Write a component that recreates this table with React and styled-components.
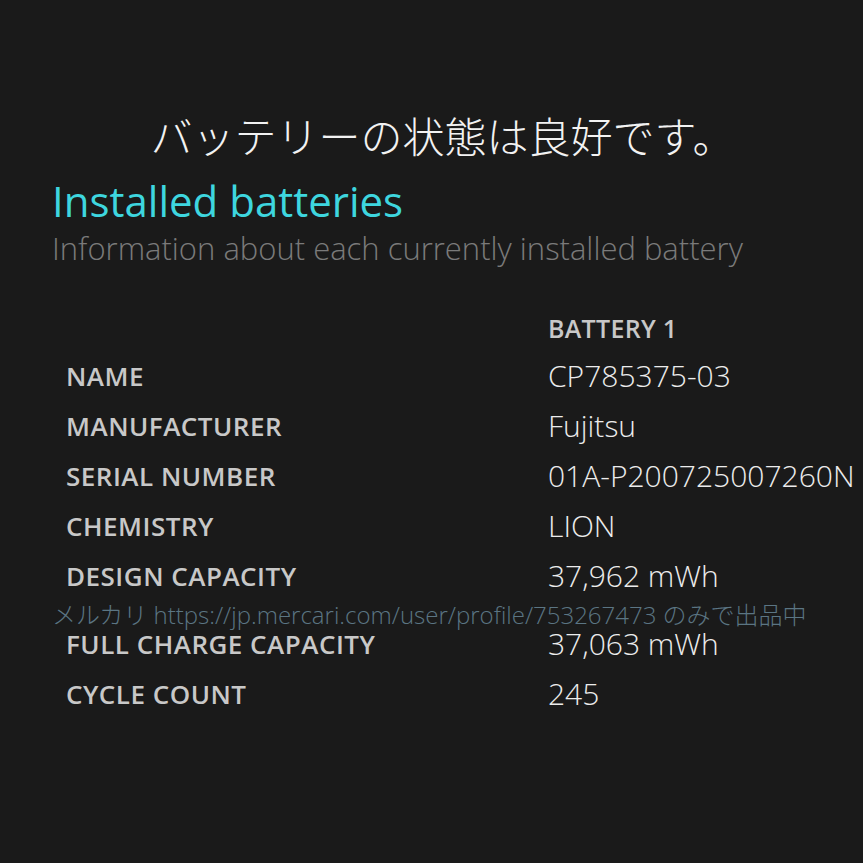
import React from 'react';
import styled, { createGlobalStyle } from 'styled-components';

const GlobalStyle = createGlobalStyle`
  html, body {
    margin: 0;
    padding: 0;
    background: #1a1a1a;
  }
  body {
    font-family: 'Open Sans', 'Noto Sans', 'Noto Sans CJK JP', sans-serif;
  }
`;

const Page = styled.div`
  width: 863px;
  height: 863px;
  box-sizing: border-box;
  padding: 109px 0 0 52px;
  background: #1a1a1a;
  overflow: hidden;
`;

const Status = styled.h1`
  margin: 0 0 0 -30px;
  text-align: center;
  font-family: 'Noto Sans CJK JP', sans-serif;
  font-weight: 300;
  font-size: 42px;
  line-height: 52px;
  color: #f2f2f2;
`;

const SectionTitle = styled.h2`
  margin: 18px 0 0;
  font-family: 'Open Sans', sans-serif;
  font-weight: 400;
  font-size: 42px;
  line-height: 44px;
  color: #3ed6df;
`;

const SectionSub = styled.p`
  margin: 5px 0 0;
  font-family: 'Open Sans', sans-serif;
  font-weight: 300;
  font-size: 31px;
  line-height: 40px;
  color: #7a7a7a;
`;

const Table = styled.div`
  margin-top: 41px;
  display: grid;
  grid-template-columns: 482px auto;
  padding-left: 14px;
`;

const Row = styled.div`
  display: contents;
`;

const Label = styled.div`
  padding: 10px 0;
  font-family: 'Open Sans', sans-serif;
  font-weight: 600;
  font-size: 26px;
  letter-spacing: 0.5px;
  line-height: 30px;
  color: #c8c8c8;
  white-space: nowrap;
`;

const Head = styled(Label)`
  padding: 2px 0 6px;
  font-size: 25px;
  letter-spacing: 0.3px;
  line-height: 34px;
`;

const Value = styled.div`
  padding: 10px 0;
  font-family: 'Open Sans', sans-serif;
  font-weight: 300;
  font-size: 30px;
  line-height: 30px;
  color: #ececec;
  white-space: nowrap;
`;

const Watermark = styled.div`
  grid-column: 1 / -1;
  margin: 1px 0 -9px -14px;
  font-family: 'Open Sans', 'Noto Sans CJK JP', sans-serif;
  font-weight: 300;
  font-size: 24px;
  line-height: 26px;
  color: #5b7583;
  white-space: nowrap;
`;

const rows = [
  ['NAME', 'CP785375-03'],
  ['MANUFACTURER', 'Fujitsu'],
  ['SERIAL NUMBER', '01A-P200725007260N'],
  ['CHEMISTRY', 'LION'],
  ['DESIGN CAPACITY', '37,962 mWh'],
];

const rowsAfter = [
  ['FULL CHARGE CAPACITY', '37,063 mWh'],
  ['CYCLE COUNT', '245'],
];

const App = () => {
  return (
    <>
      <GlobalStyle />
      <Page>
        <Status>バッテリーの状態は良好です。</Status>
        <SectionTitle>Installed batteries</SectionTitle>
        <SectionSub>Information about each currently installed battery</SectionSub>
        <Table>
          <Row>
            <Head />
            <Head>BATTERY 1</Head>
          </Row>
          {rows.map(([k, v]) => (
            <Row key={k}>
              <Label>{k}</Label>
              <Value>{v}</Value>
            </Row>
          ))}
          <Watermark>
            メルカリ https://jp.mercari.com/user/profile/753267473 のみで出品中
          </Watermark>
          {rowsAfter.map(([k, v]) => (
            <Row key={k}>
              <Label>{k}</Label>
              <Value>{v}</Value>
            </Row>
          ))}
        </Table>
      </Page>
    </>
  );
};

export default App;
